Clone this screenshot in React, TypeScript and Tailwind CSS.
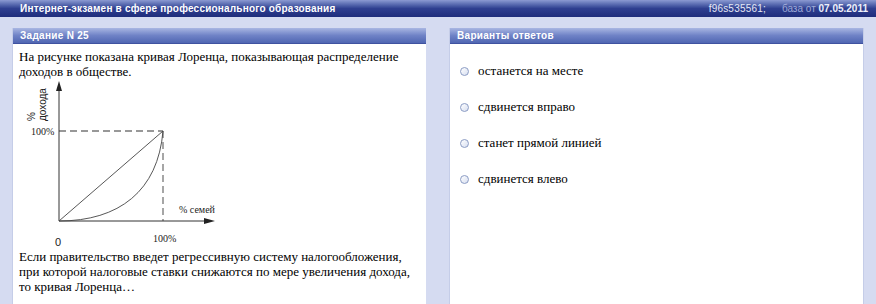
import React from 'react';

const answers = ['останется на месте', 'сдвинется вправо', 'станет прямой линией', 'сдвинется влево'];

function LorenzChart() {
  return (
    <svg width="240" height="170" viewBox="0 0 240 170" className="block">
      {/* dashed guides */}
      <line x1="40" y1="52" x2="144" y2="52" stroke="#777" strokeWidth="1.3" strokeDasharray="7 4" />
      <line x1="144" y1="52" x2="144" y2="142" stroke="#777" strokeWidth="1.3" strokeDasharray="7 4" />
      {/* axes */}
      <line x1="40" y1="142" x2="40" y2="10" stroke="#333" strokeWidth="1" />
      <polygon points="40,2 37,12 43,12" fill="#222" />
      <line x1="40" y1="142" x2="186" y2="142" stroke="#333" strokeWidth="1" />
      <polygon points="196,142 185,139 185,145" fill="#222" />
      {/* equality line + curve */}
      <line x1="40" y1="142" x2="144" y2="52" stroke="#444" strokeWidth="0.9" />
      <path d="M40,142 C100,142 139,112 144,52" fill="none" stroke="#444" strokeWidth="0.9" />
      {/* labels */}
      <text x="12" y="56" fontSize="10" fontFamily="'Liberation Serif', serif" fill="#222">100%</text>
      <text x="160" y="134" fontSize="10" fontFamily="'Liberation Serif', serif" fill="#222">% семей</text>
      <text x="134" y="163" fontSize="10" fontFamily="'Liberation Serif', serif" fill="#222">100%</text>
      <text x="36" y="167" fontSize="11" fontFamily="'Liberation Sans', sans-serif" fill="#222">0</text>
      <g transform="translate(16,42) rotate(-90)">
        <text x="0" y="0" fontSize="10" fontFamily="'Liberation Sans', sans-serif" fill="#222">%</text>
        <text x="0" y="11" fontSize="10" fontFamily="'Liberation Sans', sans-serif" fill="#222">дохода</text>
      </g>
    </svg>
  );
}

function PanelHeader({ title }: { title: string }) {
  return (
    <div className="h-[16px] flex items-center px-[7px] bg-gradient-to-b from-[#a9b6e2] via-[#6f82c6] to-[#5066b2] border-b border-[#3f52a0]">
      <span className="text-[10px] font-bold text-white leading-none tracking-[0.3px]">{title}</span>
    </div>
  );
}

export default function App() {
  return (
    <div className="w-[876px] h-[304px] overflow-hidden bg-[#d5dbf1] font-['Liberation_Sans',sans-serif]">
      {/* top bar */}
      <div className="h-[17px] flex items-center justify-between px-[20px] bg-gradient-to-b from-[#8c9ad2] via-[#2f3f90] to-[#1f2d7c]">
        <span className="text-[10px] font-bold text-white leading-none tracking-[0.2px]">
          Интернет-экзамен в сфере профессионального образования
        </span>
        <span className="flex items-center gap-[16px] text-[10px] leading-none mr-[-12px]">
          <span className="text-[#e6e9f6] tracking-[0.2px]">f96s535561;</span>
          <span className="text-[#9ea9d6]">
            база от <span className="text-[#eef0fa] font-bold">07.05.2011</span>
          </span>
        </span>
      </div>

      <div className="flex pt-[11px] pl-[12px] gap-[23px]">
        {/* task panel */}
        <div className="w-[414px] h-[276px] flex flex-col bg-white border-l border-[#c5cde8]">
          <PanelHeader title="Задание N 25" />
          <div className="flex-1 px-[6px] pt-[5px] font-['Liberation_Serif',serif] text-[13px] leading-[15px] text-black">
            <p>На рисунке показана кривая Лоренца, показывающая распределение доходов в обществе.</p>
            <LorenzChart />
            <p>
              Если правительство введет регрессивную систему налогообложения, при которой налоговые ставки снижаются по
              мере увеличения дохода, то кривая Лоренца…
            </p>
          </div>
        </div>

        {/* answers panel */}
        <div className="w-[415px] h-[276px] flex flex-col bg-white border-x border-[#c5cde8]">
          <PanelHeader title="Варианты ответов" />
          <div className="pt-[9px] pl-[10px] font-['Liberation_Serif',serif] text-[13px] text-black">
            {answers.map((a) => (
              <div key={a} className="h-[36px] flex items-center gap-[9px]">
                <span className="w-[9px] h-[9px] rounded-full border border-[#8b9cc4] bg-gradient-to-br from-white to-[#d8dff0]" />
                <span>{a}</span>
              </div>
            ))}
          </div>
        </div>
      </div>
    </div>
  );
}
